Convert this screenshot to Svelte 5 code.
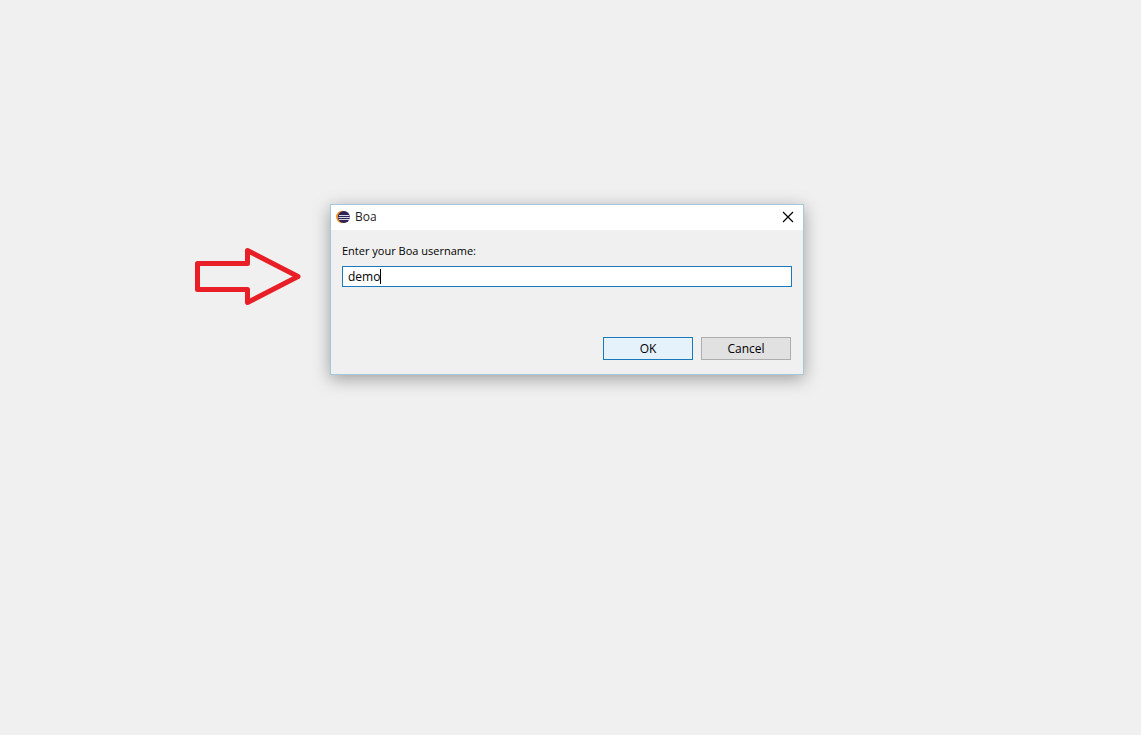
<script>
  let username = $state('demo');
</script>

<main class="desktop">
  <svg class="arrow" viewBox="0 0 108 60" aria-hidden="true">
    <path d="M4.500 17.500H54.500V4.500L105 30.500L54.500 56.500V43.500H4.500Z" />
  </svg>

  <form class="dialog" aria-labelledby="dialog-title" onsubmit={(e) => e.preventDefault()}>
    <header class="titlebar">
      <svg class="logo" viewBox="0 0 14 14" aria-hidden="true">
        <circle cx="6.300" cy="7" r="6.200" fill="#f0922b" />
        <circle cx="7.900" cy="7" r="6" fill="#2c2255" />
        <path d="M3 5.500H13.300M2.500 7.500H13.600M3 9.500H13.300" stroke="#d8d6e6" stroke-width="1" />
      </svg>
      <h1 id="dialog-title">Boa</h1>
      <button class="close" type="button" aria-label="Close">
        <svg viewBox="0 0 12 12" aria-hidden="true"><path d="M1 1L11 11M11 1L1 11" /></svg>
      </button>
    </header>

    <div class="body">
      <label for="username">Enter your Boa username:</label>
      <div class="field">
        <input id="username" type="text" bind:value={username} autocomplete="off" spellcheck="false" />
        <span class="caret"></span>
      </div>
      <div class="actions">
        <button class="primary" type="submit">OK</button>
        <button type="button">Cancel</button>
      </div>
    </div>
  </form>
</main>

<style>
  :global(body) {
    margin: 0;
    background: #f0f0f0;
  }

  .desktop {
    position: relative;
    min-height: 100vh;
    font: 12px/16px "Open Sans", "Noto Sans", sans-serif;
    color: #000;
  }

  .arrow {
    position: absolute;
    left: 193px;
    top: 246px;
    width: 108px;
    height: 60px;
    fill: none;
    stroke: #e91f27;
    stroke-width: 5;
    stroke-linejoin: round;
  }

  .dialog {
    position: absolute;
    left: 330px;
    top: 204px;
    width: 474px;
    box-sizing: border-box;
    border: 1px solid #a3c9d9;
    background: #f0f0f0;
    box-shadow: 0 4px 16px rgba(0, 0, 0, 0.34);
  }

  .titlebar {
    display: flex;
    align-items: center;
    gap: 5px;
    height: 24px;
    padding: 0 9px 1px 5px;
    background: #fff;
  }

  .logo {
    width: 14px;
    height: 14px;
  }

  h1 {
    flex: 1;
    margin: 0;
    font-size: 12px;
    font-weight: 400;
    color: #222;
  }

  button {
    font: inherit;
    color: inherit;
  }

  .close {
    display: flex;
    padding: 0;
    border: 0;
    background: none;
  }

  .close svg {
    width: 12px;
    height: 12px;
    fill: none;
    stroke: #000;
    stroke-width: 1.2;
  }

  .body {
    display: flex;
    flex-direction: column;
    padding: 13px 11px 14px;
  }

  label {
    font-size: 11px;
  }

  .field {
    display: flex;
    align-items: center;
    height: 19px;
    margin-top: 7px;
    padding-left: 5px;
    border: 1px solid #1a78bd;
    background: #fff;
  }

  input {
    field-sizing: content;
    padding: 0;
    border: 0;
    outline: 0;
    background: none;
    font: inherit;
    color: inherit;
    caret-color: transparent;
  }

  .caret {
    width: 1px;
    height: 15px;
    background: #000;
  }

  .actions {
    display: flex;
    justify-content: flex-end;
    gap: 8px;
    margin-top: 50px;
    padding-right: 1px;
  }

  .actions button {
    width: 90px;
    height: 23px;
    padding: 0;
    border: 1px solid #adadad;
    background: #e1e1e1;
  }

  .actions .primary {
    border-color: #1a78bd;
    background: #e5f1fb;
  }
</style>
